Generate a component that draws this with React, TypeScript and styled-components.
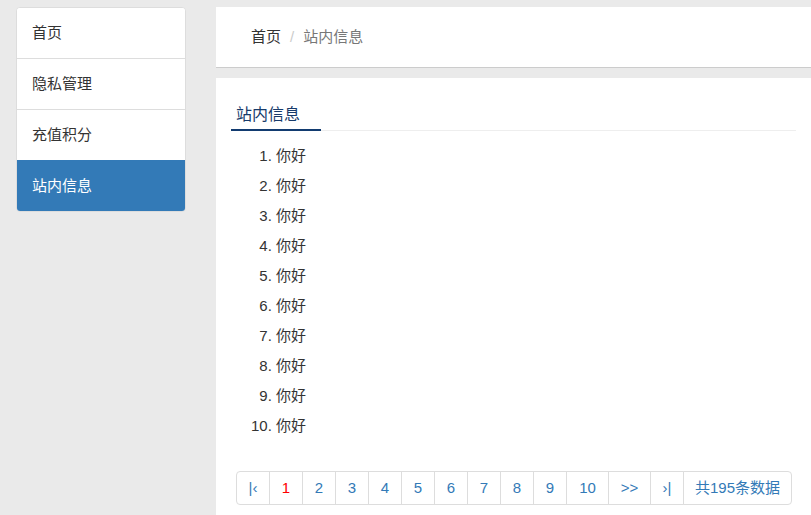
import React from "react";
import styled, { createGlobalStyle } from "styled-components";

const Global = createGlobalStyle`
  html, body { margin: 0; padding: 0; background: #eaeaea; }
  body {
    font-family: "Liberation Sans", "Noto Sans CJK SC", sans-serif;
    font-size: 15px;
    line-height: 20px;
    color: #333;
    overflow: hidden;
  }
  * { box-sizing: border-box; }
`;

const Page = styled.div`
  display: flex;
  align-items: flex-start;
  gap: 30px;
  padding: 7px 0 0 16px;
  min-height: 515px;
`;

const Sidebar = styled.ul`
  width: 170px;
  flex: none;
  margin: 0;
  padding: 0;
  list-style: none;
  border: 1px solid #ddd;
  border-radius: 4px;
  background: #fff;
  overflow: hidden;
`;

const SideItem = styled.li<{ $active?: boolean }>`
  padding: 15px 15px;
  line-height: 20px;
  background: ${(p) => (p.$active ? "#337ab7" : "#fff")};
  color: ${(p) => (p.$active ? "#fff" : "#333")};
  border-top: 1px solid ${(p) => (p.$active ? "#337ab7" : "#ddd")};
  &:first-child { border-top: none; }
`;

const Main = styled.div`
  flex: 1;
  display: flex;
  flex-direction: column;
  gap: 10px;
  min-width: 0;
`;

const Crumbs = styled.div`
  height: 61px;
  background: #fff;
  border-bottom: 1px solid #ccc;
  display: flex;
  align-items: center;
  padding: 0 35px;
`;

const Crumb = styled.span<{ $active?: boolean }>`
  color: ${(p) => (p.$active ? "#777" : "#333")};
`;

const Sep = styled.span`
  color: #ccc;
  padding: 0 9px;
`;

const Panel = styled.div`
  background: #fff;
  padding: 16px 15px 30px;
  min-height: 440px;
`;

const Tabs = styled.ul`
  display: flex;
  margin: 0;
  padding: 0;
  list-style: none;
  border-bottom: 1px solid #eee;
`;

const Tab = styled.li`
  width: 90px;
  padding: 11px 0 4px 5px;
  margin-bottom: -1px;
  font-size: 16px;
  line-height: 20px;
  color: #173a6a;
  border-bottom: 2px solid #123b70;
`;

const Messages = styled.ol`
  margin: 10px 0 0;
  padding-left: 45px;
`;

const Message = styled.li`
  line-height: 30px;
`;

const Pager = styled.ul`
  display: inline-flex;
  margin: 30px 0 0 5px;
  padding: 0;
  list-style: none;
  border-radius: 4px;
`;

const PageItem = styled.li<{ $current?: boolean; $w: number }>`
  width: ${(p) => p.$w}px;
  padding: 6px 0;
  line-height: 20px;
  border: 1px solid #ddd;
  margin-left: -1px;
  color: ${(p) => (p.$current ? "#f00" : "#337ab7")};
  background: #fff;
  text-align: center;
  white-space: nowrap;
  &:first-child { margin-left: 0; border-radius: 4px 0 0 4px; }
  &:last-child { border-radius: 0 4px 4px 0; }
`;

const menu = ["首页", "隐私管理", "充值积分", "站内信息"];
const pages = ["1", "2", "3", "4", "5", "6", "7", "8", "9", "10"];

export default function App() {
  return (
    <>
      <Global />
      <Page>
        <Sidebar>
          {menu.map((m, i) => (
            <SideItem key={m} $active={i === 3}>
              {m}
            </SideItem>
          ))}
        </Sidebar>
        <Main>
          <Crumbs>
            <Crumb>首页</Crumb>
            <Sep>/</Sep>
            <Crumb $active>站内信息</Crumb>
          </Crumbs>
          <Panel>
            <Tabs>
              <Tab>站内信息</Tab>
            </Tabs>
            <Messages>
              {Array.from({ length: 10 }).map((_, i) => (
                <Message key={i}>你好</Message>
              ))}
            </Messages>
            <Pager>
              <PageItem $w={34}>|‹</PageItem>
              {pages.map((p, i) => (
                <PageItem key={p} $current={i === 0} $w={p === "10" ? 43 : 34}>
                  {p}
                </PageItem>
              ))}
              <PageItem $w={43}>&gt;&gt;</PageItem>
              <PageItem $w={34}>›|</PageItem>
              <PageItem $w={109}>共195条数据</PageItem>
            </Pager>
          </Panel>
        </Main>
      </Page>
    </>
  );
}
